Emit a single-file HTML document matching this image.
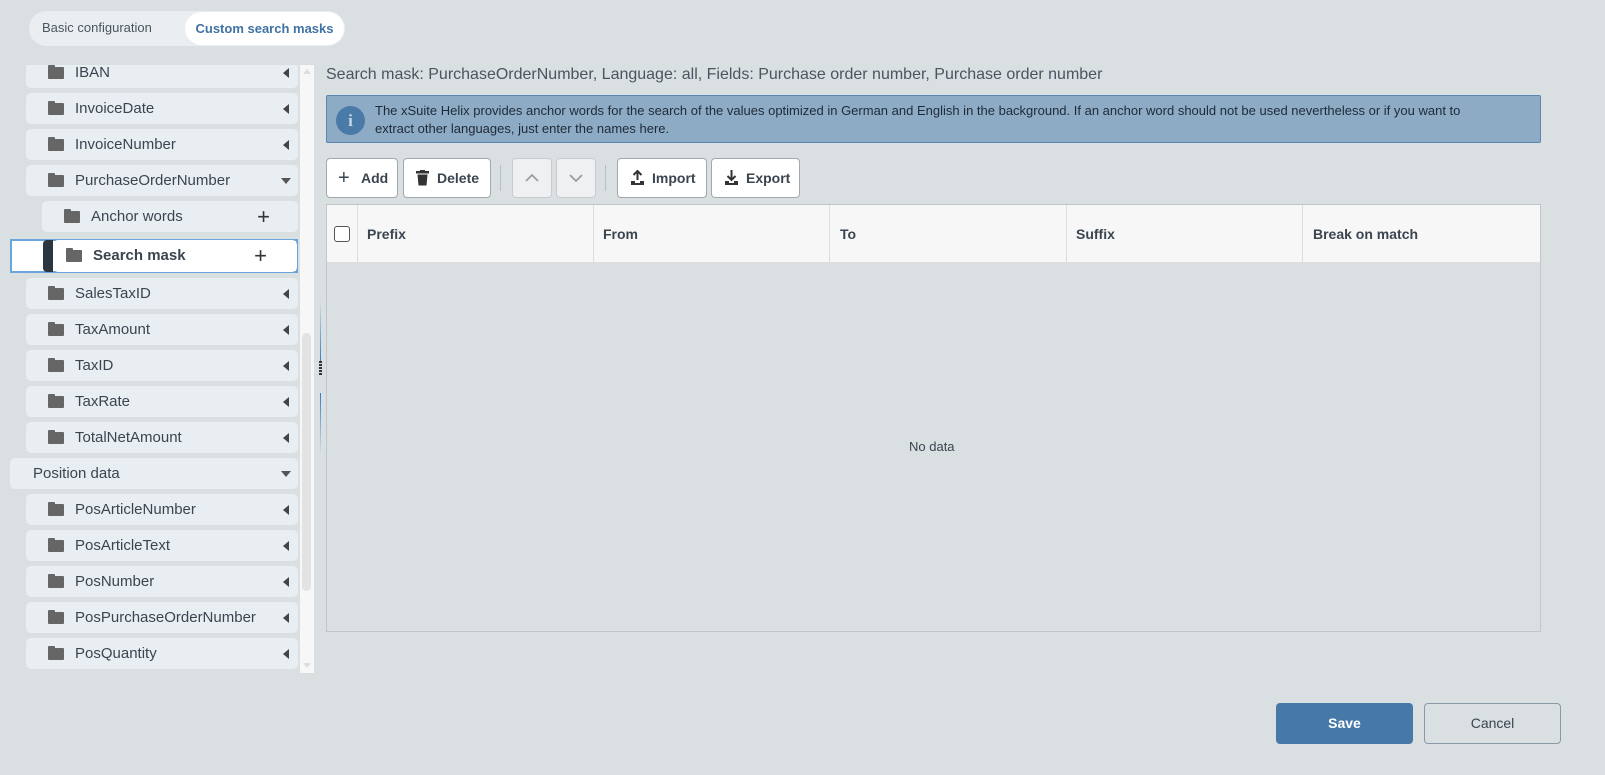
<!DOCTYPE html>
<html><head><style>
*{box-sizing:border-box;margin:0;padding:0}
body{width:1605px;height:775px;background:#dadfe2;font-family:"Liberation Sans",Arial,sans-serif;position:relative;overflow:hidden;color:#3b4550}
.abs{position:absolute}
.tabs{left:29px;top:11px;width:316px;height:35px;background:#eaeef1;border-radius:18px}
.tab1{left:42px;top:20px;font-size:13px;color:#4a5560}
.tab2{left:185px;top:12px;width:159px;height:33px;background:#fff;border-radius:17px;font-size:13px;font-weight:bold;color:#3f72a4;text-align:center;line-height:33px}
.side{left:0;top:65px;width:314px;height:608px;overflow:hidden}
.item{position:absolute;left:26px;width:272px;height:31px;background:#e9eef2;border-radius:5px;font-size:15px;color:#3b4550;line-height:31px}
.item .f{position:absolute;left:22px;top:10px;width:16px;height:12px;background:#666;border-radius:1px}
.item .f:before{content:"";position:absolute;left:0;top:-2px;width:7px;height:3px;background:#666;border-radius:1px 1px 0 0}
.item .t{position:absolute;left:49px}
.item .a{position:absolute;right:9px;top:11px;width:0;height:0;border-top:5px solid transparent;border-bottom:5px solid transparent;border-right:6px solid #444}
.item .d{position:absolute;right:7px;top:13px;width:0;height:0;border-left:5px solid transparent;border-right:5px solid transparent;border-top:6px solid #555}
.plus{position:absolute;right:30px;top:0;font-size:22px;font-weight:normal;color:#333}
.btn{position:absolute;top:158px;height:40px;background:#fff;border:1px solid #a0a8b0;border-radius:4px;font-size:14px;font-weight:bold;color:#3b4550;line-height:38px}
.btn.dis{background:#eef0f2;border-color:#c5cbd0}
th{font-weight:bold}
</style></head><body>
<div class="abs tabs"></div>
<div class="abs tab1">Basic configuration</div>
<div class="abs tab2">Custom search masks</div>

<div class="abs side">
<div class="item" style="top:-8px"><span class="f"></span><span class="t">IBAN</span><span class="a"></span></div>
<div class="item" style="top:28px"><span class="f"></span><span class="t">InvoiceDate</span><span class="a"></span></div>
<div class="item" style="top:64px"><span class="f"></span><span class="t">InvoiceNumber</span><span class="a"></span></div>
<div class="item" style="top:100px"><span class="f"></span><span class="t">PurchaseOrderNumber</span><span class="d"></span></div>
<div class="item" style="top:136px;left:42px;width:256px"><span class="f"></span><span class="t" style="left:49px">Anchor words</span><span class="plus" style="right:28px">+</span></div>
<div class="abs" style="left:10px;top:174px;width:288px;height:34px;border:2px solid #6aa6dc;background:#fff"></div>
<div class="abs" style="left:43px;top:175px;width:10px;height:32px;background:#2b3640;border-radius:4px 0 0 4px"></div>
<div class="item" style="top:175px;left:53px;width:244px;height:32px;background:#fff;font-weight:bold;line-height:32px"><span class="f" style="left:13px"></span><span class="t" style="left:40px">Search mask</span><span class="plus" style="right:30px;font-weight:normal">+</span></div>
<div class="item" style="top:213px"><span class="f"></span><span class="t">SalesTaxID</span><span class="a"></span></div>
<div class="item" style="top:249px"><span class="f"></span><span class="t">TaxAmount</span><span class="a"></span></div>
<div class="item" style="top:285px"><span class="f"></span><span class="t">TaxID</span><span class="a"></span></div>
<div class="item" style="top:321px"><span class="f"></span><span class="t">TaxRate</span><span class="a"></span></div>
<div class="item" style="top:357px"><span class="f"></span><span class="t">TotalNetAmount</span><span class="a"></span></div>
<div class="item" style="top:393px;left:10px;width:288px"><span class="t" style="left:23px">Position data</span><span class="d"></span></div>
<div class="item" style="top:429px"><span class="f"></span><span class="t">PosArticleNumber</span><span class="a"></span></div>
<div class="item" style="top:465px"><span class="f"></span><span class="t">PosArticleText</span><span class="a"></span></div>
<div class="item" style="top:501px"><span class="f"></span><span class="t">PosNumber</span><span class="a"></span></div>
<div class="item" style="top:537px"><span class="f"></span><span class="t">PosPurchaseOrderNumber</span><span class="a"></span></div>
<div class="item" style="top:573px"><span class="f"></span><span class="t">PosQuantity</span><span class="a"></span></div>
<div class="abs" style="left:300px;top:0;width:14px;height:608px;background:#f7f7f7"></div>
<div class="abs" style="left:302px;top:268px;width:9px;height:258px;background:#e3e3e3;border-radius:5px"></div>
<div class="abs" style="left:303px;top:4px;width:0;height:0;border-left:4px solid transparent;border-right:4px solid transparent;border-bottom:5px solid #ddd"></div>
<div class="abs" style="left:303px;top:598px;width:0;height:0;border-left:4px solid transparent;border-right:4px solid transparent;border-top:5px solid #ddd"></div>
</div>
<div class="abs" style="left:320px;top:300px;width:1px;height:62px;background:linear-gradient(#dadfe2,#2f7fc0)"></div>
<div class="abs" style="left:320px;top:393px;width:1px;height:62px;background:linear-gradient(#2f7fc0,#dadfe2)"></div>
<div class="abs" style="left:319px;top:361px;width:3px;height:14px;background:repeating-linear-gradient(#333 0 2px,transparent 2px 3px)"></div>

<div class="abs" style="left:326px;top:66px;font-size:16px;color:#4a5560">Search mask: PurchaseOrderNumber, Language: all, Fields: Purchase order number, Purchase order number</div>
<div class="abs" style="left:326px;top:95px;width:1215px;height:48px;background:#8eabc6;border:1px solid #5a86b0;border-radius:2px"></div>
<div class="abs" style="left:336px;top:106px;width:29px;height:29px;border-radius:50%;background:#4a7aa8;color:#c8d6e4;font-weight:bold;font-family:'Liberation Serif',serif;font-size:17px;text-align:center;line-height:29px">i</div>
<div class="abs" style="left:375px;top:102px;font-size:13px;line-height:18px;color:#1e2a36">The xSuite Helix provides anchor words for the search of the values optimized in German and English in the background. If an anchor word should not be used nevertheless or if you want to<br>extract other languages, just enter the names here.</div>

<div class="btn" style="left:326px;width:72px"><span style="position:absolute;left:11px;font-size:20px;font-weight:normal">+</span><span style="position:absolute;left:34px">Add</span></div>
<div class="btn" style="left:403px;width:88px"><svg style="position:absolute;left:12px;top:11px" width="13" height="16" viewBox="0 0 13 16"><rect x="0" y="1" width="13" height="2.5" fill="#333"/><rect x="4" y="0" width="5" height="2" fill="#333"/><path d="M1.5 4.5h10l-1 11h-8z" fill="#333"/></svg><span style="position:absolute;left:33px">Delete</span></div>
<div class="abs" style="left:500px;top:165px;width:1px;height:26px;background:#b8bfc6"></div>
<div class="btn dis" style="left:512px;width:40px;text-align:center"><svg width="14" height="10" viewBox="0 0 14 10" style="margin-top:14px"><path d="M1 8l6-6 6 6" fill="none" stroke="#999" stroke-width="1.6"/></svg></div>
<div class="btn dis" style="left:556px;width:40px;text-align:center"><svg width="14" height="10" viewBox="0 0 14 10" style="margin-top:14px"><path d="M1 2l6 6 6-6" fill="none" stroke="#999" stroke-width="1.6"/></svg></div>
<div class="abs" style="left:605px;top:165px;width:1px;height:26px;background:#b8bfc6"></div>
<div class="btn" style="left:617px;width:90px"><svg style="position:absolute;left:12px;top:11px" width="15" height="16" viewBox="0 0 15 16"><path d="M7.5 1v9M3.5 5l4-4 4 4" fill="none" stroke="#333" stroke-width="2"/><path d="M1 11h4v2h5v-2h4v4H1z" fill="#333"/></svg><span style="position:absolute;left:34px">Import</span></div>
<div class="btn" style="left:711px;width:89px"><svg style="position:absolute;left:12px;top:11px" width="15" height="16" viewBox="0 0 15 16"><path d="M7.5 0v10M3.5 6l4 4 4-4" fill="none" stroke="#333" stroke-width="2"/><path d="M1 11h4v2h5v-2h4v4H1z" fill="#333"/></svg><span style="position:absolute;left:34px">Export</span></div>

<div class="abs" style="left:326px;top:204px;width:1215px;height:428px;border:1px solid #c0c6cc;background:#dadfe2"></div>
<div class="abs" style="left:327px;top:205px;width:1213px;height:58px;background:#f7f7f7;border-bottom:1px solid #e0e0e0;font-size:14px;font-weight:bold;color:#3b4550">
<div class="abs" style="left:7px;top:21px;width:16px;height:16px;border:1px solid #555;border-radius:3px;background:#fff"></div>
<div class="abs" style="left:30px;top:0;width:1px;height:58px;background:#ddd"></div>
<div class="abs" style="left:40px;top:21px">Prefix</div>
<div class="abs" style="left:266px;top:0;width:1px;height:58px;background:#ddd"></div>
<div class="abs" style="left:276px;top:21px">From</div>
<div class="abs" style="left:502px;top:0;width:1px;height:58px;background:#ddd"></div>
<div class="abs" style="left:513px;top:21px">To</div>
<div class="abs" style="left:739px;top:0;width:1px;height:58px;background:#ddd"></div>
<div class="abs" style="left:749px;top:21px">Suffix</div>
<div class="abs" style="left:975px;top:0;width:1px;height:58px;background:#ddd"></div>
<div class="abs" style="left:986px;top:21px">Break on match</div>
</div>
<div class="abs" style="left:909px;top:439px;font-size:13px;color:#3b4550">No data</div>

<div class="abs" style="left:1276px;top:703px;width:137px;height:41px;background:#4679a8;border-radius:4px;color:#fff;font-weight:bold;font-size:14px;text-align:center;line-height:41px">Save</div>
<div class="abs" style="left:1424px;top:703px;width:137px;height:41px;border:1px solid #8a98a8;border-radius:4px;color:#3b4550;font-size:14px;text-align:center;line-height:39px">Cancel</div>
</body></html>
